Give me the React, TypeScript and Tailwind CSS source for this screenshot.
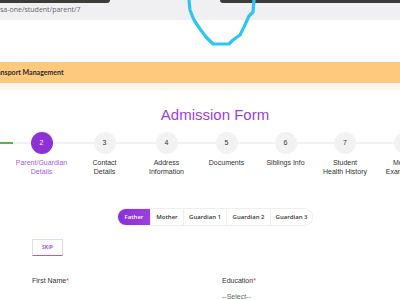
import React from "react";

const steps = [
  { n: 1, label: ["Student", "Details"], w: 63 },
  { n: 2, label: ["Parent/Guardian", "Details"], w: 63 },
  { n: 3, label: ["Contact", "Details"], w: 63 },
  { n: 4, label: ["Address", "Information"], w: 61 },
  { n: 5, label: ["Documents"], w: 59 },
  { n: 6, label: ["Siblings Info"], w: 59 },
  { n: 7, label: ["Student", "Health History"], w: 60 },
  { n: 8, label: ["Medical", "Examination"], w: 60 },
];

const tabs = [
  { name: "Father", w: "w-[32px]" },
  { name: "Mother", w: "w-[33px]" },
  { name: "Guardian 1", w: "w-[43px]" },
  { name: "Guardian 2", w: "w-[44px]" },
  { name: "Guardian 3", w: "w-[42px]" },
];

export default function App() {
  return (
    <div className="relative w-[400px] h-[300px] overflow-hidden bg-white font-['Liberation_Sans',sans-serif]">
      {/* browser chrome */}
      <div className="h-[20px] bg-[#f0f0f2] flex flex-col">
        <div className="flex h-[3px]">
          <div className="w-[110px] bg-[#3d3c38] rounded-br-[3px]" />
          <div className="w-[110px]" />
          <div className="flex-1 bg-[#3d3c38] rounded-bl-[3px]" />
        </div>
        <div className="flex-1 flex items-center pb-[2px] text-[7px] text-[#666] font-['Open_Sans',sans-serif]">
          sa-one/student/parent/7
        </div>
      </div>

      <div className="h-[42px]" />

      <div className="h-[21px] bg-[#fec97d] flex items-center">
        <span className="ml-[-9px] text-[7px] font-bold text-[#2b2b2b] font-['Lato',sans-serif]">
          Transport Management
        </span>
      </div>
      <div className="h-[7px] bg-[#faf6ee]" />

      {/* title */}
      <div className="mt-[16px] pl-[30px] flex justify-center">
        <h1 className="text-[15px] leading-[18px] text-[#9a3fe0]">Admission Form</h1>
      </div>

      {/* stepper */}
      <div className="relative mt-[8px] h-[46px]">
        <div className="absolute left-0 right-0 top-[10px] h-[2px] bg-[#f2f2f2]" />
        <div className="absolute left-0 w-[13px] top-[10px] h-[2px] bg-[#4cb84c]" />
        <div className="relative flex ml-[-53px]">
          {steps.map((s) => {
            const active = s.n === 2;
            return (
              <div key={s.n} className="flex flex-col items-center shrink-0" style={{ width: s.w }}>
                <div
                  className={
                    active
                      ? "w-[22px] h-[22px] rounded-full bg-[#8d31d6] text-white text-[7px] flex items-center justify-center"
                      : "w-[22px] h-[22px] rounded-full bg-[#f2f2f2] text-[#333] text-[7px] flex items-center justify-center"
                  }
                >
                  {s.n}
                </div>
                <div
                  className={
                    active
                      ? "mt-[4px] text-[7px] leading-[9px] text-[#a45ce6] text-center whitespace-nowrap"
                      : "mt-[4px] text-[7px] leading-[9px] text-[#333] text-center whitespace-nowrap"
                  }
                >
                  {s.label.map((l) => (
                    <div key={l}>{l}</div>
                  ))}
                </div>
              </div>
            );
          })}
        </div>
      </div>

      {/* tabs */}
      <div className="mt-[30px] pl-[30px] flex justify-center">
        <div className="flex h-[18px] rounded-full border border-[#eeeeee] overflow-hidden font-['Open_Sans',sans-serif]">
          {tabs.map((t, i) => (
            <div
              key={t.name}
              className={
                i === 0
                  ? `${t.w} flex items-center justify-center text-[6px] font-semibold text-white bg-gradient-to-r from-[#8a2ed6] to-[#9b3fe0]`
                  : `${t.w} flex items-center justify-center text-[6px] font-semibold text-[#333] border-l border-[#eeeeee]`
              }
            >
              {t.name}
            </div>
          ))}
        </div>
      </div>

      {/* skip */}
      <div className="mt-[13px] pl-[32px]">
        <button className="w-[31px] h-[17px] border border-[#e6d6f7] border-b-[#a060e0] text-[5px] font-bold text-[#9b59e0] flex items-center justify-center font-['Open_Sans',sans-serif]">
          SKIP
        </button>
      </div>

      {/* form */}
      <div className="mt-[20px] pl-[32px] grid grid-cols-[190px_1fr] text-[7px] text-[#333]">
        <div>
          First Name<span className="text-[#e53935]">*</span>
        </div>
        <div>
          Education<span className="text-[#e53935]">*</span>
          <div className="mt-[5px] text-[#666]">--Select--</div>
        </div>
      </div>

      {/* scribble */}
      <svg className="absolute left-0 top-0 pointer-events-none" width="400" height="60" viewBox="0 0 400 60">
        <path
          d="M189 0 L190 10 L194 20 L200 29 L206 37 L213 44 L229 44 L233 40 L240 35 L244 27 L249 16 L253 12 L254 0"
          fill="none"
          stroke="#2ec5f3"
          strokeWidth="3.2"
          strokeLinecap="round"
          strokeLinejoin="round"
        />
      </svg>
    </div>
  );
}
